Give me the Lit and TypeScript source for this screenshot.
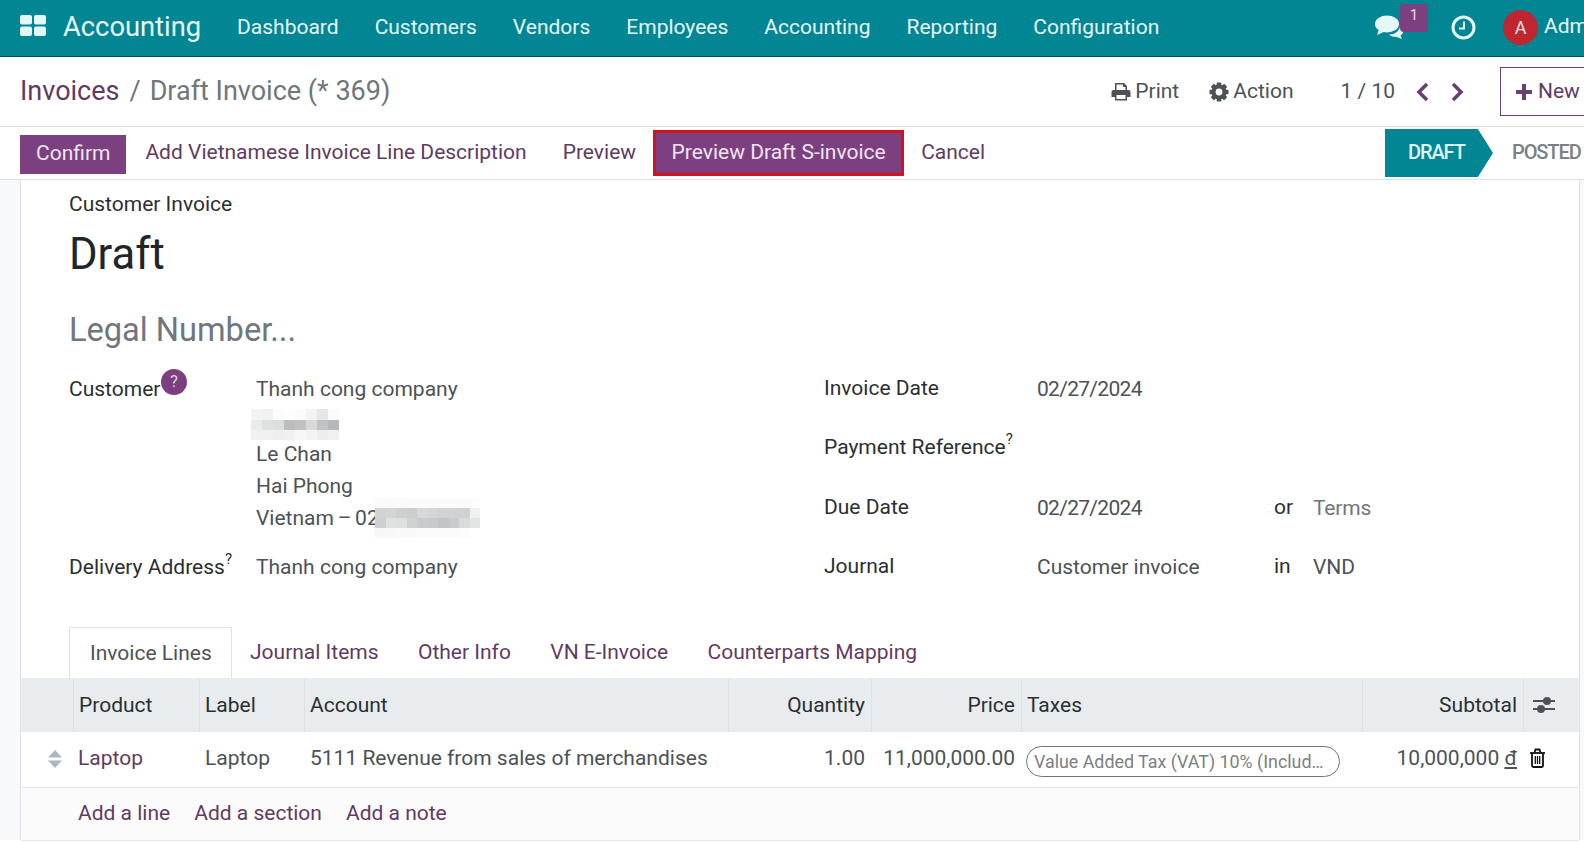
import { LitElement, html, css, svg } from "lit";
import { customElement } from "lit/decorators.js";

const NAV = ["Dashboard", "Customers", "Vendors", "Employees", "Accounting", "Reporting", "Configuration"];
const MOSAIC_A = [
  ["#f3f3f3","#f0f1f1","#fbfcfc","#fdfdfd","#fbfbfb","#f3f3f3","#e4e6e7","#fafafa"],
  ["#eaeaea","#dfe0e0","#dcdddd","#bbbdbe","#c0c2c2","#d8d8d6","#bfc3c4","#b3b8ba"],
  ["#f0f0f0","#eff0f0","#eeeeee","#f0f0f0","#f6f7f7","#f2f3f3","#ecedee","#f0f1f1"],
];
const MOSAIC_B = [
  ["#fafafa","#f9f9f9","#fafafa","#fbfbfb","#fbfbfb","#fbfbfb","#fbfbfb","#fbfbfb","#fbfbfb","#fcfcfc"],
  ["#cfd3d4","#d3d5d5","#cdd0d2","#cbcdce","#d5d9db","#d3d6d8","#d0d3d4","#d0d3d4","#cfd1d2","#eff1f1"],
  ["#ccd0d2","#dfe1de","#dde0df","#cfd2d3","#c8cbcd","#c7cacc","#c1c4c6","#c9cbcd","#d8dadb","#e2e4e6"],
  ["#f7f7f7","#f8f8f8","#f9f9f9","#f9f9f9","#fafafa","#fafafa","#fbfbfb","#fbfbfb","#fcfcfc","#ffffff"],
];
const GEAR_TEETH = [0, 45, 90, 135, 180, 225, 270, 315];

const mosaic = (rows: string[][], cls: string) => html`<span class="mosaic ${cls}">${rows.flat().map((c) => html`<i style="background:${c}"></i>`)}</span>`;

@customElement("app-root")
export class AppRoot extends LitElement {
  static styles = css`
    :host { display: block; width: 1584px; height: 843px; overflow: hidden; background: #fff; font-family: Roboto, "Noto Sans", sans-serif; font-size: 21px; color: #4c5257; line-height: 1.5; }
    * { box-sizing: border-box; }
    .nav { height: 57px; background: #028694; border-bottom: 1px solid #0a4a52; display: flex; align-items: center; padding-left: 20px; color: #e6f7f8; white-space: nowrap; overflow: hidden; }
    .apps { width: 26px; height: 21px; margin: 0 17px 5px 0; color: #e4f6f7; flex: none; }
    .brand { font-size: 27.3px; margin-right: 36px; color: #e6f7f8; line-height: 38px; padding-bottom: 2px; }
    .menu { display: flex; gap: 36px; }
    .sys { margin-left: auto; display: flex; align-items: center; width: 209px; flex: none; position: relative; height: 100%; padding-bottom: 2px; }
    .chat { width: 28px; height: 24px; color: #e6f7f8; flex: none; }
    .badge { position: absolute; left: 25px; top: 4px; width: 28px; height: 28px; border-radius: 4px; background: #7c3f80; font-size: 15px; line-height: 22px; text-align: center; color: #e9dcea; }
    .clock { width: 25px; height: 25px; margin-left: 48px; color: #e6f7f8; flex: none; }
    .avatar { width: 35px; height: 35px; border-radius: 50%; background: #bf2630; color: #f6e3e4; margin-left: 27px; display: flex; align-items: center; justify-content: center; font-size: 18px; flex: none; }
    .user { margin-left: 6px; }

    .cp1 { height: 70px; border-bottom: 1px solid #dee2e6; display: flex; align-items: center; padding-left: 20px; white-space: nowrap; overflow: hidden; }
    .crumbs { font-size: 27px; color: #70767c; line-height: 40px; padding-bottom: 2px; }
    .crumbs .root { color: #5f3b63; }
    .crumbs .sep { margin: 0 9px 0 10px; }
    .tools { margin-left: auto; display: flex; align-items: center; flex: none; }
    .tool { display: flex; align-items: center; gap: 4px; color: #4c5257; }
    .tool svg { width: 20px; height: 20px; color: #4c5257; }
    .tool + .tool { margin-left: 30px; }
    .pager { margin-left: 47px; margin-right: 20px; }
    .chev { width: 16px; height: 20px; color: #6a3f72; flex: none; }
    .chev + .chev { margin-left: 18px; }
    .newbtn { margin-left: 35px; margin-right: -16px; width: 100px; height: 49px; border: 1px solid #6a3f72; display: flex; align-items: center; padding-left: 14px; gap: 5px; color: #5f3b63; }
    .newbtn svg { width: 18px; height: 18px; color: #6a3f72; }

    .cp2 { height: 53px; border-bottom: 1px solid #dee2e6; display: flex; align-items: center; padding-left: 20px; white-space: nowrap; overflow: hidden; }
    .btn { height: 39px; display: flex; align-items: center; padding: 0 18px; color: #5f3b63; }
    .btn.pv { padding-right: 17px; }
    .btn.cancel { padding-left: 17px; }
    .primary { background: #7c3f80; color: #efe6f0; padding: 0 16px; }
    .confirm { margin-top: 2px; margin-right: 1px; }
    .btn.hl { height: 46px; padding: 0 15.500px; border: 3px solid #d4121e; background: #7c3f80; color: #efe6f0; }
    .status { margin-left: auto; display: flex; align-items: center; height: 100%; font-weight: 500; font-size: 20px; flex: none; }
    .draft { width: 108px; height: 48px; background: #028694; color: #dff3f4; display: flex; align-items: center; padding: 0 0 2px 23px; letter-spacing: -1.1px; clip-path: polygon(0 0, 86% 0, 100% 50%, 86% 100%, 0 100%); }
    .posted { padding: 0 0 2px 19px; width: 91px; color: #7b8084; letter-spacing: -1.1px; }

    .body { display: flex; height: 660px; }
    .side { width: 21px; flex: none; background: #f8f9fa; border-right: 1px solid #dee2e6; }
    .sheet { flex: 1; min-width: 0; background: #fff; }
    .gutter { width: 5px; flex: none; background: #f8f9fa; border-left: 1px solid #dee2e6; }
    .head { padding: 9px 0 0 48px; }
    .type { color: #2a2f33; line-height: 30px; }
    h1 { margin: 6px 0 0; font-size: 43.6px; font-weight: 400; line-height: 60px; color: #212529; }
    .legal { margin-top: 22px; font-size: 32.6px; line-height: 46px; color: #70767c; }

    .form { display: grid; grid-template-columns: 755px 1fr; padding-left: 48px; margin-top: 20px; }
    .group { display: grid; align-content: start; }
    .left { grid-template-columns: 187px 1fr; }
    .right { grid-template-columns: 213px 237px 39px 1fr; }
    .lbl { color: #2a2f33; white-space: nowrap; line-height: 32px; }
    .right .lbl { line-height: 30px; }
    .val { line-height: 32px; white-space: nowrap; }
    .date { letter-spacing: -0.7px; }
    .addr { display: flex; flex-direction: column; }
    .addr > * { height: 32.3px; }
    .ph { color: #70767c; letter-spacing: -0.2px; }
    sup { font-size: 15px; line-height: 0; position: relative; top: -2px; vertical-align: super; }
    .help { position: absolute; left: 92px; top: -4px; width: 26px; height: 26px; border-radius: 50%; background: #7c3f80; color: #e4d5e6; font-size: 16px; line-height: 26px; text-align: center; }
    .custname { display: inline-block; position: relative; width: 90px; }
    .gap1 { height: 26.6px; grid-column: 1 / -1; }
    .gap2 { height: 30.6px; grid-column: 1 / -1; }
    .gap3 { height: 26.6px; grid-column: 1 / -1; }

    .mosaic i { display: block; }
    .addr .ma { display: grid; grid-template-columns: repeat(8, 11px); grid-auto-rows: 10.300px; width: 88px; height: 31px; margin: 4px 0 -2.700px -5.500px; }
    .addr .vn { display: flex; align-items: center; word-spacing: -1.500px; }
    .mb { display: grid; flex: none; grid-template-columns: repeat(10, 10.500px); grid-auto-rows: 10px; width: 105px; height: 40px; margin-left: -3.500px; }
    .delivery { margin-top: 16px; }

    .tabs { display: flex; margin-top: 44px; padding-left: 48px; height: 51px; }
    .tab { padding: 0 19.700px; line-height: 50px; color: #5f3b63; white-space: nowrap; }
    .tab.on { border: 1px solid #dee2e6; border-bottom: none; background: #fff; height: 51px; color: #4c5257; width: 163px; padding: 0 20px; }
    .tab.second { padding-left: 18px; }

    .grid { display: grid; grid-template-columns: 52px 126px 105px 424px 143px 150px 341px 161px 1fr; }
    .hd { height: 54px; background: #e9ecef; display: flex; align-items: center; padding: 1px 6px 0 5px; color: #2a2f33; border-left: 1px solid #dee2e6; white-space: nowrap; }
    .hd:first-child { border-left: none; }
    .rt { justify-content: flex-end; }
    .cell { height: 56px; display: flex; align-items: center; padding: 0 6px 2px; white-space: nowrap; border-bottom: 1px solid #e3e6e9; }
    .cell.link { color: #5f3b63; }
    .cell.lk { padding-left: 5px; }
    .cell.handle { justify-content: flex-end; padding: 0 11px 0 0; }
    .handle svg { width: 14px; height: 20px; color: #adb5bd; }
    .tag { height: 31px; width: 314px; border: 1px solid #70767c; border-radius: 16px; padding: 0 7px; display: block; font-size: 17.850px; line-height: 29px; color: #7b8084; overflow: hidden; margin: 6px 0 0 -1px; }
    .curr { text-decoration: underline; text-underline-offset: 2px; }
    .hd.opt { padding: 0 0 0 8px; }
    .opt svg { width: 24px; height: 20px; color: #4c5257; }
    .cell.trash { justify-content: flex-start; padding: 0 0 2px 6px; }
    .trash svg { width: 17px; height: 20px; color: #111; }
    .addrow { height: 53px; background: #fbfbfb; border-bottom: 1px solid #e3e6e9; display: flex; align-items: center; padding: 0 0 1px 57px; gap: 24px; color: #5f3b63; }
  `;

  render() {
    return html`
      <div class="nav">
        <svg class="apps" viewBox="0 0 26 21" fill="currentColor">
          <rect x="0" y="0" width="12" height="9.500" rx="2"/><rect x="14" y="0" width="12" height="9.500" rx="2"/>
          <rect x="0" y="11.500" width="12" height="9.500" rx="2"/><rect x="14" y="11.500" width="12" height="9.500" rx="2"/>
        </svg>
        <div class="brand">Accounting</div>
        <div class="menu">${NAV.map((n) => html`<span>${n}</span>`)}</div>
        <div class="sys">
          <svg class="chat" viewBox="0 0 28 24" fill="currentColor">
            <ellipse cx="12" cy="9" rx="12" ry="8.500"/><path d="M4 14 L2 20 L10 16.500Z"/>
            <path d="M14 19.500 C20 19.500 24 16 25 12 C27 13.500 28 15 28 17 C28 18.500 27 19.500 25.500 20.500 L27 24 L21 21.800 C18 22 16 21 14 19.500Z"/>
          </svg>
          <span class="badge">1</span>
          <svg class="clock" viewBox="0 0 25 25" fill="none" stroke="currentColor" stroke-width="3">
            <circle cx="12.500" cy="12.500" r="10.500"/><path d="M13 6.500 V13.500 H8" stroke-width="2"/>
          </svg>
          <span class="avatar">A</span>
          <span class="user">Administrator</span>
        </div>
      </div>

      <div class="cp1">
        <div class="crumbs"><span class="root">Invoices</span><span class="sep">/</span><span>Draft Invoice (* 369)</span></div>
        <div class="tools">
          <span class="tool">
            <svg viewBox="0 0 20 20" fill="currentColor"><path d="M4 1 H13 L16 4 V8 H14.500 V5 H12 V2.500 H5.500 V8 H4Z"/><path d="M2.500 8 H17.500 A2 2 0 0 1 19.500 10 V15 H16 V18.500 H4 V15 H.5 V10 A2 2 0 0 1 2.500 8Z M5.500 13 V17 H14.500 V13Z" fill-rule="evenodd"/></svg>
            Print
          </span>
          <span class="tool">
            <svg viewBox="0 0 20 20" fill="currentColor">
              <circle cx="10" cy="10" r="5.500" fill="none" stroke="currentColor" stroke-width="4.200"/>
              ${GEAR_TEETH.map((a) => svg`<rect x="7.700" y=".5" width="4.600" height="4" rx=".6" transform="rotate(${a} 10 10)"/>`)}
            </svg>
            Action
          </span>
          <span class="pager">1 / 10</span>
          <svg class="chev" viewBox="0 0 16 20" fill="none" stroke="currentColor" stroke-width="3.600"><path d="M12 2 L4 10 L12 18"/></svg>
          <svg class="chev" viewBox="0 0 16 20" fill="none" stroke="currentColor" stroke-width="3.600"><path d="M4 2 L12 10 L4 18"/></svg>
          <span class="newbtn">
            <svg viewBox="0 0 18 18" fill="currentColor"><path d="M7 1 H11 V7 H17 V11 H11 V17 H7 V11 H1 V7 H7Z"/></svg>
            New
          </span>
        </div>
      </div>

      <div class="cp2">
        <span class="btn primary confirm">Confirm</span>
        <span class="btn">Add Vietnamese Invoice Line Description</span>
        <span class="btn pv">Preview</span>
        <span class="btn hl">Preview Draft S-invoice</span>
        <span class="btn cancel">Cancel</span>
        <div class="status">
          <span class="draft">DRAFT</span>
          <span class="posted">POSTED</span>
        </div>
      </div>

      <div class="body">
        <div class="side"></div>
        <div class="sheet">
          <div class="head">
            <div class="type">Customer Invoice</div>
            <h1>Draft</h1>
            <div class="legal">Legal Number...</div>
          </div>
          <div class="form">
            <div class="group left">
              <div class="lbl"><span class="custname">Customer<span class="help">?</span></span></div>
              <div class="addr val">
                <span>Thanh cong company</span>
                ${mosaic(MOSAIC_A, "ma")}
                <span>Le Chan</span>
                <span>Hai Phong</span>
                <span class="vn">Vietnam – 02${mosaic(MOSAIC_B, "mb")}</span>
              </div>
              <div class="lbl delivery">Delivery Address<sup>?</sup></div>
              <div class="val delivery">Thanh cong company</div>
            </div>
            <div class="group right">
              <div class="lbl">Invoice Date</div><div class="val date">02/27/2024</div><div></div><div></div>
              <div class="gap1"></div>
              <div class="lbl">Payment Reference<sup>?</sup></div><div></div><div></div><div></div>
              <div class="gap2"></div>
              <div class="lbl">Due Date</div><div class="val date">02/27/2024</div><div class="lbl">or</div><div class="val ph">Terms</div>
              <div class="gap3"></div>
              <div class="lbl">Journal</div><div class="val">Customer invoice</div><div class="lbl">in</div><div class="val">VND</div>
            </div>
          </div>
          <div class="tabs">
            <span class="tab on">Invoice Lines</span>
            <span class="tab second">Journal Items</span>
            <span class="tab">Other Info</span>
            <span class="tab">VN E-Invoice</span>
            <span class="tab">Counterparts Mapping</span>
          </div>
          <div class="grid">
            <div class="hd"></div>
            <div class="hd">Product</div>
            <div class="hd">Label</div>
            <div class="hd">Account</div>
            <div class="hd rt">Quantity</div>
            <div class="hd rt">Price</div>
            <div class="hd">Taxes</div>
            <div class="hd rt">Subtotal</div>
            <div class="hd opt">
              <svg viewBox="0 0 24 20" fill="currentColor"><rect x="1" y="5" width="22" height="2"/><rect x="1" y="13" width="22" height="2"/><circle cx="15" cy="6" r="4"/><circle cx="9" cy="14" r="4"/></svg>
            </div>
            <div class="cell handle">
              <svg viewBox="0 0 14 20" fill="currentColor"><path d="M7 1 L14 8.500 H0Z M0 11.500 H14 L7 19Z"/></svg>
            </div>
            <div class="cell link lk">Laptop</div>
            <div class="cell">Laptop</div>
            <div class="cell">5111 Revenue from sales of merchandises</div>
            <div class="cell rt">1.00</div>
            <div class="cell rt">11,000,000.00</div>
            <div class="cell"><span class="tag">Value Added Tax (VAT) 10% (Includ…</span></div>
            <div class="cell rt">10,000,000&nbsp;<span class="curr">đ</span></div>
            <div class="cell trash">
              <svg viewBox="0 0 17 20" fill="none" stroke="currentColor" stroke-width="1.800"><path d="M1 5 H16"/><path d="M5.500 4.500 L6.500 1.500 H10.500 L11.500 4.500"/><path d="M3 5 V17.500 A1.500 1.500 0 0 0 4.500 19 H12.500 A1.500 1.500 0 0 0 14 17.500 V5"/><path d="M6.300 8 V16 M8.500 8 V16 M10.700 8 V16" stroke-width="1.300"/></svg>
            </div>
          </div>
          <div class="addrow"><span>Add a line</span><span>Add a section</span><span>Add a note</span></div>
        </div>
        <div class="gutter"></div>
      </div>
    `;
  }
}
